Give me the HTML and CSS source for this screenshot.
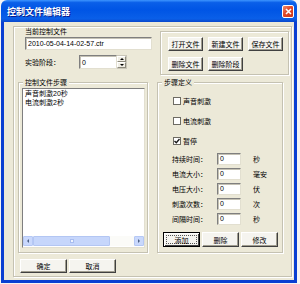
FILE: index.html
```html
<!DOCTYPE html>
<html lang="zh-CN">

<head>
    <meta charset="UTF-8">
    <title>控制文件编辑器</title>
    <link rel="stylesheet" href="styles.css">
</head>

<body>
    <div class="window">
        <!-- Barra de título -->
        <div class="titlebar">
            <span class="title">控制文件编辑器</span>
            <span class="close">
                <svg width="7" height="7" viewBox="0 0 7 7"><path d="M1 1 L6 6 M6 1 L1 6" stroke="#fff" stroke-width="1.6"/></svg>
            </span>
        </div>

        <div class="client">
            <div class="frame">
                <div class="main">
                    <!-- Columna izquierda -->
                    <div class="col-left">
                        <div class="cur-label">当前控制文件</div>
                        <div class="textbox file-box">2010-05-04-14-02-57.ctr</div>
                        <div class="stage-row">
                            <span class="stage-label">实验阶段：</span>
                            <div class="spin">
                                <div class="textbox spin-input">0</div>
                                <div class="spin-btns">
                                    <span class="spin-btn"><i class="arrow-up"></i></span>
                                    <span class="spin-btn"><i class="arrow-down"></i></span>
                                </div>
                            </div>
                        </div>

                        <div class="group steps-group">
                            <span class="legend">控制文件步骤</span>
                            <div class="listbox">
                                <div class="list-items">
                                    <div>声音刺激20秒</div>
                                    <div>电流刺激2秒</div>
                                </div>
                                <div class="hscroll">
                                    <span class="sb-arrow"><i class="arrow-left"></i></span>
                                    <span class="sb-thumb"><i class="grip"></i></span>
                                    <span class="sb-track"></span>
                                    <span class="sb-arrow"><i class="arrow-right"></i></span>
                                </div>
                            </div>
                        </div>
                    </div>

                    <!-- Columna derecha -->
                    <div class="col-right">
                        <div class="group btn-group">
                            <button class="btn">打开文件</button>
                            <button class="btn">新建文件</button>
                            <button class="btn">保存文件</button>
                            <button class="btn">删除文件</button>
                            <button class="btn">删除阶段</button>
                        </div>

                        <div class="group def-group">
                            <span class="legend">步骤定义</span>
                            <div class="check-row"><span class="checkbox"></span>声音刺激</div>
                            <div class="check-row"><span class="checkbox"></span>电流刺激</div>
                            <div class="check-row">
                                <span class="checkbox">
                                    <svg width="6" height="6" viewBox="0 0 6 6"><path d="M0.5 3 L2.3 4.8 L5.5 1" fill="none" stroke="#1a1a1a" stroke-width="1.4"/></svg>
                                </span>暂停
                            </div>

                            <div class="field-row"><span class="field-label">持续时间：</span><div class="textbox field-input">0</div><span class="unit">秒</span></div>
                            <div class="field-row"><span class="field-label">电流大小：</span><div class="textbox field-input">0</div><span class="unit">毫安</span></div>
                            <div class="field-row"><span class="field-label">电压大小：</span><div class="textbox field-input">0</div><span class="unit">伏</span></div>
                            <div class="field-row"><span class="field-label">刺激次数：</span><div class="textbox field-input">0</div><span class="unit">次</span></div>
                            <div class="field-row"><span class="field-label">间隔时间：</span><div class="textbox field-input">0</div><span class="unit">秒</span></div>

                            <div class="def-buttons">
                                <button class="btn btn-default"><span class="focus">添加</span></button>
                                <button class="btn">删除</button>
                                <button class="btn">修改</button>
                            </div>
                        </div>
                    </div>
                </div>

                <!-- Botones inferiores -->
                <div class="footer">
                    <button class="btn footer-btn">确定</button>
                    <button class="btn footer-btn">取消</button>
                </div>
            </div>
        </div>
    </div>
</body>

</html>
```

FILE: styles.css
```css
* {
    box-sizing: border-box;
}

body {
    margin: 0;
    background: #f4f4f4;
    font-family: "Liberation Sans", "Noto Sans CJK SC", sans-serif;
    font-size: 7px;
    color: #000;
}

.window {
    margin-left: 1px;
    width: 296px;
    height: 283px;
    display: flex;
    flex-direction: column;
}

/* Barra de título */
.titlebar {
    height: 22px;
    border-radius: 6px 6px 0 0;
    background: linear-gradient(to bottom, #3d95ff 0%, #0a5fe8 12%, #0055e5 45%, #0a5fe8 85%, #0a48cc 100%);
    display: flex;
    align-items: center;
    justify-content: space-between;
    padding: 0 3px 0 6px;
}

.title {
    color: #fff;
    font-weight: bold;
    font-size: 9px;
    text-shadow: 1px 1px #0a1e8a;
}

.close {
    width: 12px;
    height: 13px;
    border: 1px solid #fff;
    border-radius: 2px;
    background: linear-gradient(135deg, #f08c6c, #e0482a 45%, #c8371a);
    display: flex;
    align-items: center;
    justify-content: center;
}

.client {
    flex: 1;
    background: #ece9d8;
    border: 3px solid #0a3fd2;
    border-top: 0;
    padding: 4px 2px 0 9px;
}

/* Marco grabado */
.frame,
.group {
    border: 1px solid #c5c2b2;
    box-shadow: inset 1px 1px 0 #fff, 1px 1px 0 #fff;
}

.frame {
    height: 251px;
    padding-left: 4px;
    display: flex;
    flex-direction: column;
}

.main {
    height: 227px;
    display: flex;
}

.col-left {
    width: 130px;
    display: flex;
    flex-direction: column;
}

.cur-label {
    height: 10px;
    line-height: 10px;
    padding-left: 7px;
}

.textbox {
    background: #fff;
    border: 1px solid;
    border-color: #7f7f7f #e2dfd0 #e2dfd0 #7f7f7f;
    box-shadow: inset 1px 1px 0 #c4c1b4;
    display: flex;
    align-items: center;
    padding-left: 2px;
}

.file-box {
    margin-left: 7px;
    width: 127px;
    height: 13px;
    flex-shrink: 0;
}

.stage-row {
    margin-top: 5px;
    height: 14px;
    padding-left: 7px;
    display: flex;
    align-items: center;
}

.stage-label {
    width: 54px;
}

.spin {
    display: flex;
    height: 14px;
}

.spin-input {
    width: 38px;
    height: 14px;
}

.spin-btns {
    width: 10px;
    display: flex;
    flex-direction: column;
    border: 1px solid #c9c6b8;
    border-left: 0;
    background: #fff;
}

.spin-btn {
    flex: 1;
    background: #f1efe5;
    border: 1px solid;
    border-color: #fff #8d8a7c #8d8a7c #fff;
    display: flex;
    align-items: center;
    justify-content: center;
}

.arrow-up,
.arrow-down,
.arrow-left,
.arrow-right {
    width: 0;
    height: 0;
    border: 2px solid transparent;
}

.arrow-up {
    border-bottom-color: #000;
    border-top-width: 0;
}

.arrow-down {
    border-top-color: #000;
    border-bottom-width: 0;
}

.arrow-left {
    border-right-color: #4d6185;
    border-left-width: 0;
}

.arrow-right {
    border-left-color: #4d6185;
    border-right-width: 0;
}

/* Grupos */
.group {
    position: relative;
}

.legend {
    position: absolute;
    top: -5px;
    left: 4px;
    padding: 0 2px;
    line-height: 9px;
    background: #ece9d8;
}

.steps-group {
    margin-top: 13px;
    height: 171px;
    padding: 5px 0 0 3px;
}

.listbox {
    width: 123px;
    height: 160px;
    background: #fff;
    border: 1px solid;
    border-color: #7f7f7f #e2dfd0 #e2dfd0 #7f7f7f;
    display: flex;
    flex-direction: column;
}

.list-items {
    flex: 1;
    padding-left: 2px;
    line-height: 9px;
}

.hscroll {
    height: 10px;
    display: flex;
    background: #fbfbf8;
    margin-bottom: 1px;
}

.sb-arrow {
    width: 10px;
    background: #c9d8fc;
    border: 1px solid #b5c8f5;
    border-radius: 1px;
    display: flex;
    align-items: center;
    justify-content: center;
}

.sb-thumb {
    width: 77px;
    background: #c6d6fb;
    border: 1px solid #b3c6f3;
    border-radius: 1px;
    display: flex;
    align-items: center;
    justify-content: center;
}

.grip {
    width: 4px;
    height: 4px;
    border: 1px solid #a8bdf0;
    background: #eef3fe;
}

.sb-track {
    flex: 1;
}

.col-right {
    margin-left: 9px;
    width: 132px;
    display: flex;
    flex-direction: column;
}

.btn-group {
    margin: 4px 0 0 3px;
    width: 129px;
    height: 44px;
    padding: 5px 0 0 7px;
    display: grid;
    grid-template-columns: repeat(3, 35px);
    grid-auto-rows: 14px;
    gap: 6px 5px;
}

.btn {
    height: 14px;
    padding: 0;
    font: inherit;
    color: #000;
    background: #f5f4ef;
    border: 1px solid;
    border-color: #fff #404040 #404040 #fff;
    box-shadow: inset -1px -1px 0 #a09d8f;
    display: flex;
    align-items: center;
    justify-content: center;
}

.def-group {
    margin-top: 7px;
    width: 126px;
    height: 171px;
    padding-top: 8px;
}

.check-row {
    height: 20px;
    padding-left: 15px;
    display: flex;
    align-items: center;
}

.checkbox {
    width: 8px;
    height: 8px;
    margin-right: 2px;
    background: #fff;
    border: 1px solid #6d6b63;
    display: flex;
    align-items: center;
    justify-content: center;
}

.field-row {
    height: 15px;
    padding-left: 14px;
    display: flex;
    align-items: center;
}

.field-label {
    width: 45px;
}

.field-input {
    width: 24px;
    height: 12px;
}

.unit {
    margin-left: 12px;
}

.def-buttons {
    margin-top: 6px;
    padding-left: 5px;
    display: flex;
    gap: 2px;
}

.def-buttons .btn {
    width: 37px;
    height: 15px;
}

.btn-default {
    border-color: #000;
    box-shadow: inset 1px 1px 0 #fff, inset -1px -1px 0 #404040;
}

.focus {
    border: 1px dotted #555;
    width: 31px;
    height: 9px;
    display: flex;
    align-items: center;
    justify-content: center;
}

.footer {
    margin-top: 5px;
    padding-left: 2px;
    display: flex;
    gap: 2px;
}

.footer-btn {
    width: 47px;
}
```
